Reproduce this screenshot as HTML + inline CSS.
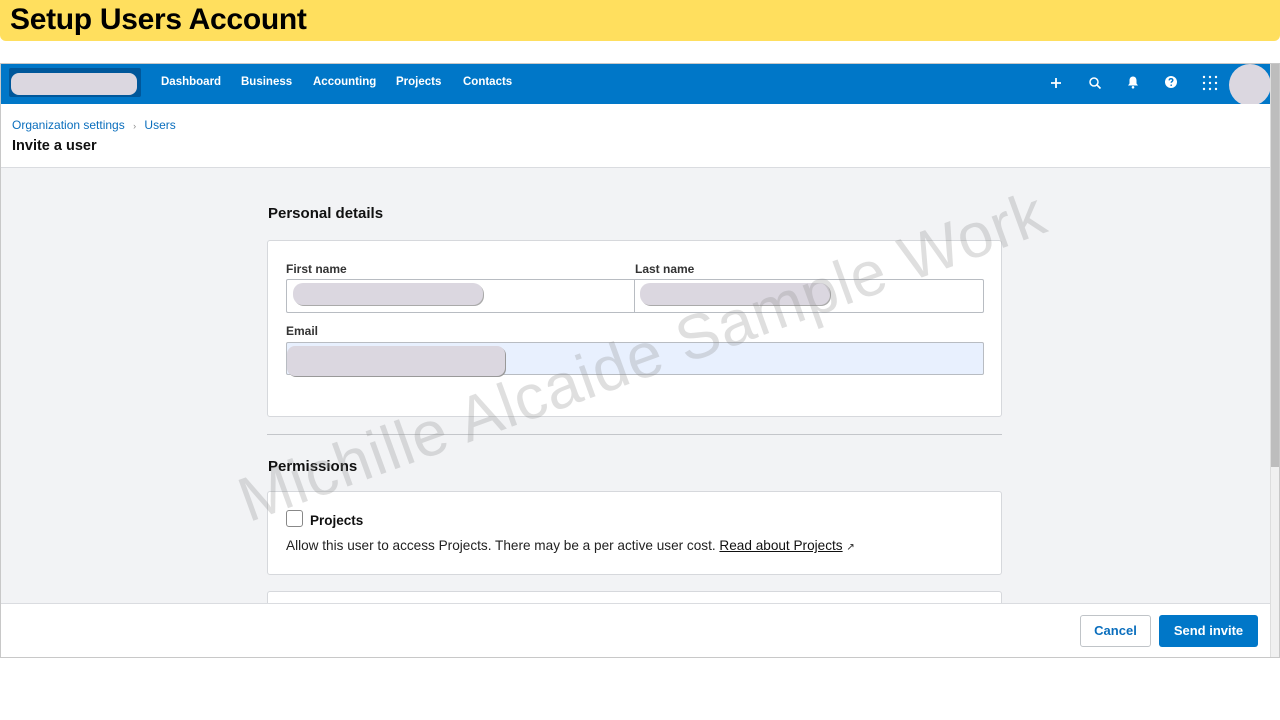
<!DOCTYPE html>
<html><head><meta charset="utf-8"><style>
*{margin:0;padding:0;box-sizing:border-box}
body{width:1280px;height:720px;background:#fff;position:relative;overflow:hidden;font-family:"Liberation Sans",Arial,sans-serif}
.abs{position:absolute}
.banner{left:0;top:0;width:1280px;height:41px;background:#ffdf5e;border-radius:0 0 6px 6px}
.banner span{position:absolute;left:10px;top:3px;font-size:30px;font-weight:bold;color:#000;letter-spacing:-0.3px}
.frame{left:0;top:63px;width:1280px;height:595px;border:1px solid #c8c8c8;background:#f2f3f5;overflow:hidden}
.nav{left:0;top:0;width:1270px;height:40px;background:#0077c8}
.nav a{position:absolute;top:12px;color:#fff;font-size:11.5px;font-weight:bold}
.hdr{left:0;top:40px;width:1270px;height:64px;background:#fff;border-bottom:1px solid #dadce0}
.pill{background:#dbd7e0;border-radius:10px}
.h2{font-size:15px;font-weight:bold;color:#111}
.card{background:#fff;border:1px solid #d6d8dc;border-radius:3px}
.lbl{font-size:12px;font-weight:bold;color:#333}
.wm{left:228px;top:405px;font-size:63px;color:rgba(140,140,140,0.28);transform:rotate(-20deg);transform-origin:0 0;white-space:nowrap;letter-spacing:1px}
</style></head><body>
<div class="abs banner"><span>Setup Users Account</span></div>
<div class="abs frame">
  <div class="abs nav">
    <div class="abs" style="left:8px;top:4px;width:132px;height:29px;background:#00579a;border-radius:2px"></div>
    <div class="abs pill" style="left:10px;top:9px;width:126px;height:22px;border-radius:8px"></div>
    <a style="left:160px">Dashboard</a><a style="left:240px">Business</a><a style="left:312px">Accounting</a><a style="left:395px">Projects</a><a style="left:462px">Contacts</a>
    <svg class="abs" style="left:1048px;top:12px" width="14" height="14" viewBox="0 0 14 14"><path d="M7 2v10M2 7h10" stroke="#fff" stroke-width="1.8"/></svg>
    <svg class="abs" style="left:1087px;top:12px" width="14" height="14" viewBox="0 0 14 14"><circle cx="6" cy="6" r="4" fill="none" stroke="#fff" stroke-width="1.5"/><path d="M9 9l3.5 3.5" stroke="#fff" stroke-width="1.6"/></svg>
    <svg class="abs" style="left:1125px;top:11px" width="14" height="15" viewBox="0 0 14 15"><path d="M7 1.5c-2.5 0-3.5 2-3.5 4v3L2 10.5h10L10.5 8.5v-3c0-2-1-4-3.5-4z" fill="#fff"/><circle cx="7" cy="12.3" r="1.3" fill="#fff"/></svg>
    <svg class="abs" style="left:1163px;top:11px" width="14" height="14" viewBox="0 0 14 14"><circle cx="7" cy="7" r="6" fill="#fff"/><path d="M5.2 5.4c0-1.1.8-1.7 1.8-1.7s1.8.6 1.8 1.5c0 1.2-1.6 1.3-1.6 2.6" fill="none" stroke="#0077c8" stroke-width="1.4"/><circle cx="7.2" cy="10.2" r=".8" fill="#0077c8"/></svg>
    <svg class="abs" style="left:1201px;top:11px" width="16" height="16" viewBox="0 0 16 16" fill="#fff"><circle cx="2" cy="2" r="1.2"/><circle cx="8" cy="2" r="1.2"/><circle cx="14" cy="2" r="1.2"/><circle cx="2" cy="8" r="1.2"/><circle cx="8" cy="8" r="1.2"/><circle cx="14" cy="8" r="1.2"/><circle cx="2" cy="14" r="1.2"/><circle cx="8" cy="14" r="1.2"/><circle cx="14" cy="14" r="1.2"/></svg>
    <div class="abs" style="left:1228px;top:0px;width:42px;height:42px;border-radius:50%;background:#dbd7e0"></div>
  </div>
  <div class="abs hdr">
    <div class="abs" style="left:11px;top:14px;font-size:12px;color:#0a6ebd">Organization settings <span style="color:#888;font-size:9px;margin:0 5px">›</span> Users</div>
    <div class="abs" style="left:11px;top:34px;font-size:14.5px;font-weight:bold;color:#111">Invite a user</div>
  </div>
  <div class="abs h2" style="left:267px;top:141px">Personal details</div>
  <div class="abs card" style="left:266px;top:176px;width:735px;height:177px">
    <div class="abs lbl" style="left:18px;top:21px">First name</div>
    <div class="abs lbl" style="left:367px;top:21px">Last name</div>
    <div class="abs" style="left:18px;top:38px;width:698px;height:34px;border:1px solid #b8bcc2;border-radius:2px"></div>
    <div class="abs" style="left:366px;top:38px;width:1px;height:34px;background:#b8bcc2"></div>
    <div class="abs pill" style="left:25px;top:42px;width:190px;height:22px;box-shadow:1px 1px 0 #aaa"></div>
    <div class="abs pill" style="left:372px;top:42px;width:190px;height:22px;box-shadow:1px 1px 0 #aaa"></div>
    <div class="abs lbl" style="left:18px;top:83px">Email</div>
    <div class="abs" style="left:18px;top:101px;width:698px;height:33px;border:1px solid #b8bcc2;border-radius:2px;background:#e8f0fe"></div>
    <div class="abs pill" style="left:19px;top:105px;width:218px;height:30px;border-radius:8px;box-shadow:1px 1px 0 #999"></div>
  </div>
  <div class="abs" style="left:266px;top:370px;width:735px;height:1px;background:#c4c6ca"></div>
  <div class="abs h2" style="left:267px;top:394px">Permissions</div>
  <div class="abs card" style="left:266px;top:427px;width:735px;height:84px">
    <div class="abs" style="left:18px;top:18px;width:17px;height:17px;border:1px solid #888;border-radius:3px;background:#fff"></div>
    <div class="abs" style="left:42px;top:21px;font-size:13.5px;font-weight:bold;color:#111">Projects</div>
    <div class="abs" style="left:18px;top:46px;font-size:13.6px;color:#222;white-space:nowrap">Allow this user to access Projects. There may be a per active user cost. <span style="text-decoration:underline;color:#111">Read about Projects</span> <span style="font-size:10px">↗</span></div>
  </div>
  <div class="abs card" style="left:266px;top:527px;width:735px;height:40px"></div>
  <div class="abs" style="left:0;top:539px;width:1270px;height:56px;background:#fff;border-top:1px solid #dadce0">
    <div class="abs" style="left:1079px;top:11px;width:71px;height:32px;border:1px solid #c0c4c8;border-radius:3px;color:#0a6ebd;font-size:13px;font-weight:bold;text-align:center;line-height:30px">Cancel</div>
    <div class="abs" style="left:1158px;top:11px;width:99px;height:32px;background:#0077c8;border-radius:3px;color:#fff;font-size:13px;font-weight:bold;text-align:center;line-height:32px">Send invite</div>
  </div>
  <div class="abs" style="left:1269px;top:0;width:10px;height:595px;background:#f0f0f0;border-left:1px solid #ddd"></div>
  <div class="abs" style="left:1270px;top:0;width:8px;height:403px;background:#bdbdbd"></div>
  <div class="abs wm">Michille Alcaide Sample Work</div>
</div>
</body></html>
